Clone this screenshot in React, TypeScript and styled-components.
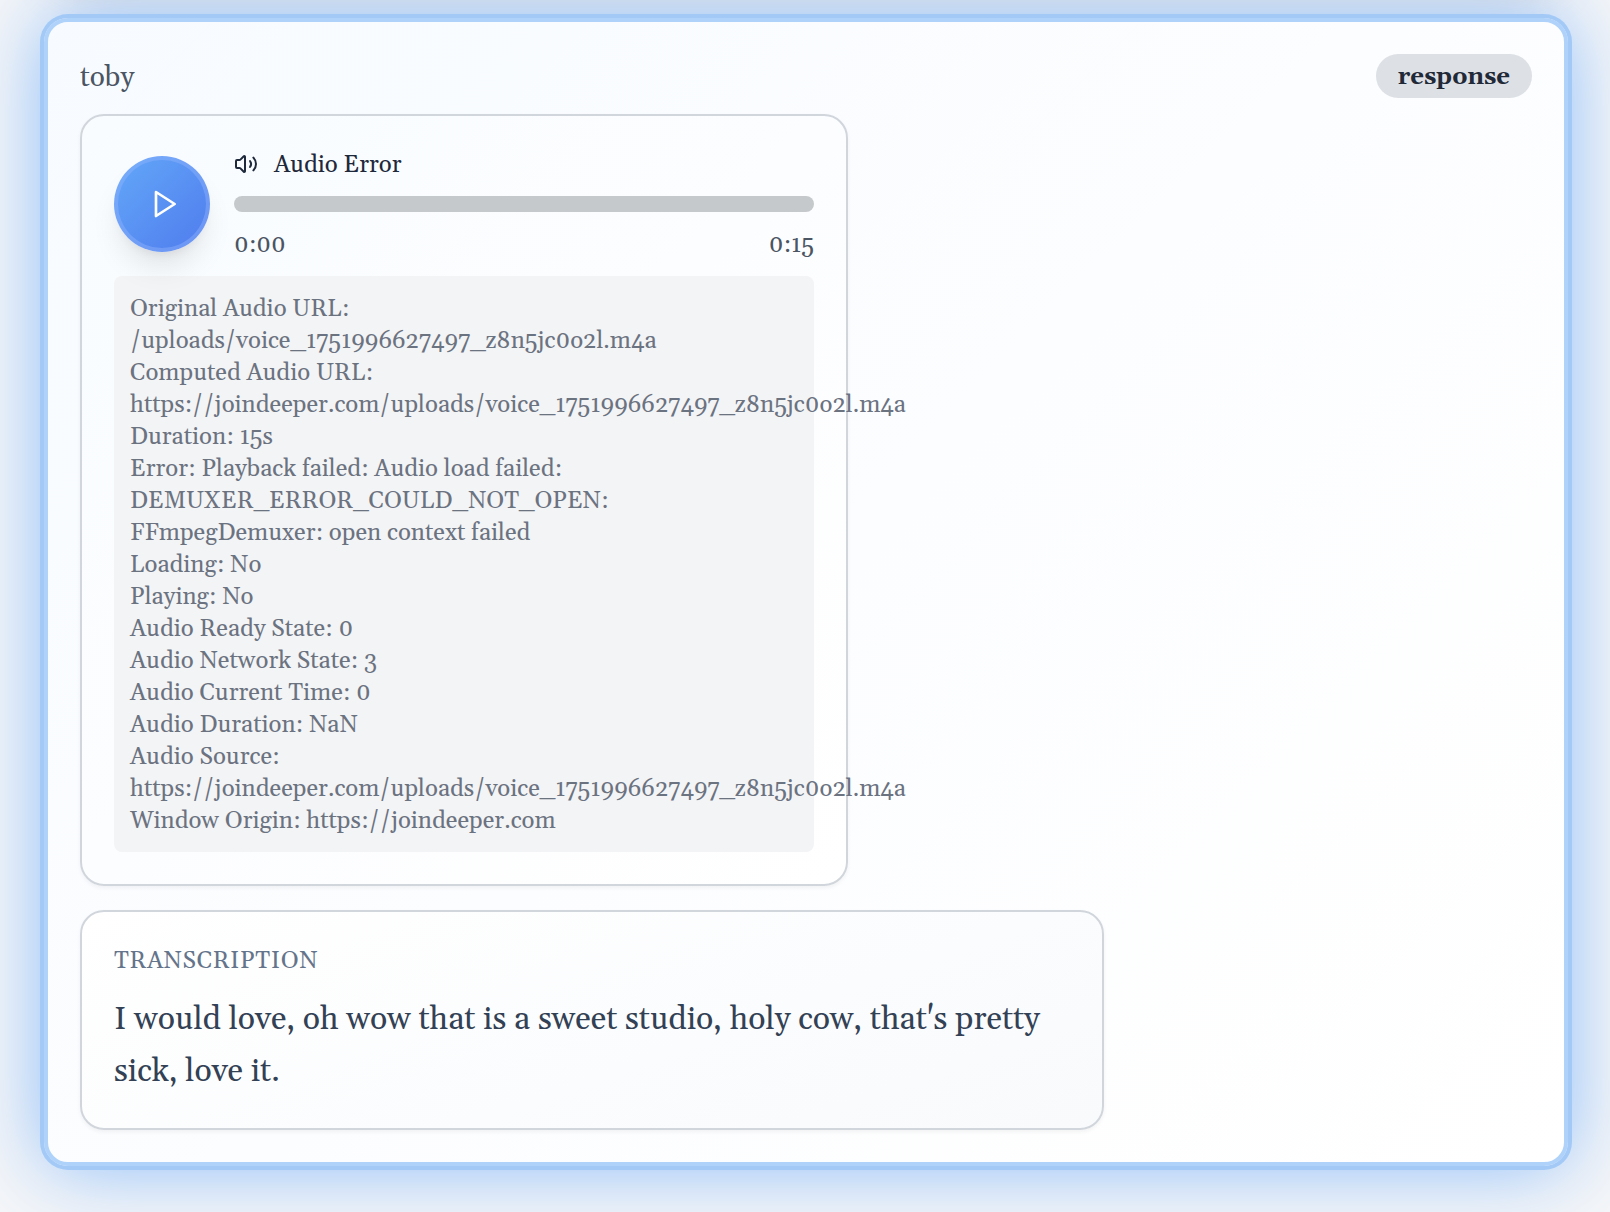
import React from "react";
import styled, { createGlobalStyle } from "styled-components";

const GlobalStyle = createGlobalStyle`
  *, *::before, *::after {
    box-sizing: border-box;
  }
  body {
    margin: 0;
    background: #f5f6f8;
    font-family: Gelasio, Georgia, "Liberation Serif", serif;
    font-size: 24px;
    line-height: 32px;
  }
`;

const Feed = styled.main`
  display: flex;
  flex-direction: column;
  gap: 58px;
  height: 1212px;
  overflow: hidden;
  padding: 0 42px 0 44px;
`;

const PreviousPost = styled.div`
  flex: none;
  height: 400px;
  margin-top: -440px;
  border-radius: 24px;
  box-shadow: 0 40px 50px -16px rgba(90, 40, 10, 0.22);
`;

const Post = styled.article`
  flex: none;
  display: flex;
  flex-direction: column;
  align-items: flex-start;
  width: 1524px;
  padding: 32px;
  border: 4px solid #afd2fb;
  border-radius: 24px;
  background: linear-gradient(135deg, #f7fbff 0%, #fcfdff 50%, #ffffff 100%);
  background-origin: border-box;
  box-shadow:
    0 0 0 4px #a3c9f7,
    0 0 80px rgba(96, 165, 250, 0.74);
`;

const PostHeader = styled.header`
  display: flex;
  align-items: center;
  justify-content: space-between;
  width: 100%;
  height: 44px;
  margin-bottom: 16px;
`;

const Author = styled.span`
  padding-top: 4px;
  font-size: 28px;
  line-height: 40px;
  color: #4b5563;
`;

const KindBadge = styled.span`
  padding: 7px 22px 5px;
  border-radius: 22px;
  background: #dde0e5;
  color: #1f2937;
  font-weight: 700;
`;

const Panel = styled.section<{ $width: number; $fill: string }>`
  width: ${(p) => p.$width}px;
  padding: 32px;
  border: 2px solid #d1d6dc;
  border-radius: 24px;
  background: ${(p) => p.$fill};
  background-clip: padding-box;
  box-shadow: 0 2px 4px rgba(0, 0, 0, 0.05);

  & + & {
    margin-top: 24px;
  }
`;

const Player = styled.div`
  display: flex;
  align-items: center;
  gap: 24px;
`;

const PlayButton = styled.button`
  position: relative;
  flex: none;
  display: flex;
  align-items: center;
  justify-content: center;
  width: 96px;
  height: 96px;
  padding: 0 0 0 4px;
  border: 4px solid rgba(147, 180, 253, 0.42);
  border-radius: 50%;
  background: linear-gradient(135deg, #63a8f9 0%, #4f7bed 100%) border-box;
  color: #fff;
  box-shadow:
    0 20px 30px -6px rgba(0, 0, 0, 0.1),
    0 8px 12px -8px rgba(0, 0, 0, 0.1);
`;

const Track = styled.div`
  flex: 1;
  display: flex;
  flex-direction: column;
  gap: 16px;
`;

const TrackTitle = styled.div`
  display: flex;
  align-items: center;
  gap: 16px;
  height: 32px;
  color: #1e293b;
`;

const TitleText = styled.span`
  padding-top: 2px;
`;

const Progress = styled.div`
  height: 16px;
  border-radius: 8px;
  background: #c6c9cb;
`;

const Times = styled.div`
  display: flex;
  justify-content: space-between;
  height: 32px;
  padding-top: 1px;
  color: #4b5563;
`;

const DebugInfo = styled.div`
  margin-top: 16px;
  padding: 17px 16px 15px;
  border-radius: 8px;
  background: #f3f4f6;
  color: #6b7280;
`;

const Label = styled.h3`
  margin: 0;
  padding: 1px 0 17px;
  font-size: 24px;
  font-weight: 400;
  line-height: 32px;
  letter-spacing: 0.6px;
  text-transform: uppercase;
  color: #64748b;
`;

const Transcript = styled.p`
  margin: 0 0 -2px;
  font-size: 32px;
  line-height: 52px;
  color: #334155;
`;

const VolumeIcon = () => (
  <svg width="24" height="24" viewBox="0 0 24 24" fill="none" stroke="currentColor" strokeWidth="2" strokeLinecap="round" strokeLinejoin="round">
    <path d="M11 4.702a.705.705 0 0 0-1.203-.498L6.413 7.587A1.4 1.4 0 0 1 5.416 8H3a1 1 0 0 0-1 1v6a1 1 0 0 0 1 1h2.416a1.4 1.4 0 0 1 .997.413l3.383 3.384A.705.705 0 0 0 11 19.298z" />
    <path d="M16 9a5 5 0 0 1 0 6" />
    <path d="M19.364 18.364a9 9 0 0 0 0-12.728" />
  </svg>
);

const PlayIcon = () => (
  <svg width="32" height="32" viewBox="0 0 24 24" fill="none" stroke="currentColor" strokeWidth="2" strokeLinecap="round" strokeLinejoin="round">
    <polygon points="6 3 20 12 6 21 6 3" />
  </svg>
);

const FILE = "/uploads/voice_1751996627497_z8n5jc0o2l.m4a";
const ORIGIN = "https://joindeeper.com";

const debugLines = [
  `Original Audio URL: ${FILE}`,
  `Computed Audio URL: ${ORIGIN}${FILE}`,
  "Duration: 15s",
  "Error: Playback failed: Audio load failed: DEMUXER_ERROR_COULD_NOT_OPEN: FFmpegDemuxer: open context failed",
  "Loading: No",
  "Playing: No",
  "Audio Ready State: 0",
  "Audio Network State: 3",
  "Audio Current Time: 0",
  "Audio Duration: NaN",
  `Audio Source: ${ORIGIN}${FILE}`,
  `Window Origin: ${ORIGIN}`,
];

export default function App() {
  return (
    <>
      <GlobalStyle />
      <Feed>
        <PreviousPost />
        <Post>
          <PostHeader>
            <Author>toby</Author>
            <KindBadge>response</KindBadge>
          </PostHeader>
          <Panel $width={768} $fill="linear-gradient(135deg, #f8fcff 0%, #fcfdff 50%, #ffffff 100%)">
            <Player>
              <PlayButton aria-label="Play">
                <PlayIcon />
              </PlayButton>
              <Track>
                <TrackTitle>
                  <VolumeIcon />
                  <TitleText>Audio Error</TitleText>
                </TrackTitle>
                <Progress />
                <Times>
                  <span>0:00</span>
                  <span>0:15</span>
                </Times>
              </Track>
            </Player>
            <DebugInfo>
              {debugLines.map((line) => (
                <div key={line}>{line}</div>
              ))}
            </DebugInfo>
          </Panel>
          <Panel $width={1024} $fill="linear-gradient(160deg, #ffffff 0%, #f8fafc 100%)">
            <Label>Transcription</Label>
            <Transcript>
              I would love, oh wow that is a sweet studio, holy cow, that's pretty sick, love it.
            </Transcript>
          </Panel>
        </Post>
      </Feed>
    </>
  );
}
